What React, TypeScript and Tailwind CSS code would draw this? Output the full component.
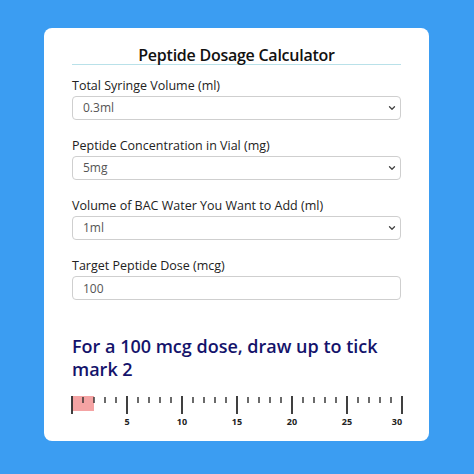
import React from "react";

const fields = [
  { label: "Total Syringe Volume (ml)", value: "0.3ml", options: ["0.3ml", "0.5ml", "1ml"] },
  { label: "Peptide Concentration in Vial (mg)", value: "5mg", options: ["5mg", "10mg", "15mg"] },
  { label: "Volume of BAC Water You Want to Add (ml)", value: "1ml", options: ["1ml", "2ml", "3ml"] },
];

function Chevron() {
  return (
    <svg
      className="pointer-events-none absolute right-[5px] top-1/2 -translate-y-1/2"
      width="8"
      height="5"
      viewBox="0 0 8 5"
      fill="none"
    >
      <path d="M1.5 1.2 L4 3.7 L6.5 1.2" stroke="#444" strokeWidth="1.3" strokeLinecap="round" strokeLinejoin="round" />
    </svg>
  );
}

function Ruler({ units, filled }: { units: number; filled: number }) {
  const step = 11;
  const ticks = Array.from({ length: units + 1 }, (_, i) => i);
  return (
    <svg width="336" height="34" className="-ml-[1px] block overflow-visible">
      <rect x="1" y="0" width={filled * step} height="15" fill="#f4a3a3" />
      {ticks.map((i) => {
        const x = 1 + i * step;
        const major = i % 5 === 0;
        return (
          <line
            key={i}
            x1={x}
            x2={x}
            y1={major ? 0 : 1}
            y2={major ? 18 : 7}
            stroke="#2b2b2b"
            strokeWidth={major ? 1.8 : 1.4}
          />
        );
      })}
      {ticks
        .filter((i) => i > 0 && i % 5 === 0)
        .map((i) => (
          <text
            key={i}
            x={i === units ? 1 + i * step - 5 : 1 + i * step}
            y="29"
            textAnchor="middle"
            fontSize="9"
            fontWeight="700"
            fill="#222"
            fontFamily="'Open Sans', sans-serif"
          >
            {i}
          </text>
        ))}
    </svg>
  );
}

export default function App() {
  return (
    <div className="flex h-[474px] w-[474px] bg-[#3b9df2] pb-[33px] pl-[44px] pr-[45px] pt-[28px] font-['Open_Sans',sans-serif]">
      <div className="flex w-full flex-col rounded-[8px] bg-white px-[28px] pt-[18px]">
        <h1 className="border-b border-[#b9e1e9] text-center text-[16px] font-semibold leading-[18px] tracking-[-0.25px] text-[#111]">
          Peptide Dosage Calculator
        </h1>

        <div className="mt-[13px] flex flex-col gap-[18px]">
          {fields.map((f) => (
            <div key={f.label} className="flex flex-col gap-[2px]">
              <label className="text-[12.5px] leading-[16px] text-[#222]">{f.label}</label>
              <div className="relative">
                <select
                  defaultValue={f.value}
                  className="block h-[24px] w-full appearance-none rounded-[4px] border border-[#cfcfcf] bg-white pl-[10px] text-[12px] text-[#555] outline-none"
                >
                  {f.options.map((o) => (
                    <option key={o}>{o}</option>
                  ))}
                </select>
                <Chevron />
              </div>
            </div>
          ))}
          <div className="flex flex-col gap-[2px]">
            <label className="text-[12.5px] leading-[16px] text-[#222]">Target Peptide Dose (mcg)</label>
            <input
              defaultValue="100"
              className="block h-[24px] w-full rounded-[4px] border border-[#cfcfcf] bg-white pl-[10px] text-[12px] text-[#555] outline-none"
            />
          </div>
        </div>

        <h2 className="mt-[35px] text-[18px] font-semibold leading-[23px] text-[#14136b]">
          For a 100 mcg dose, draw up to tick mark 2
        </h2>

        <div className="mt-[15px]">
          <Ruler units={30} filled={2} />
        </div>
      </div>
    </div>
  );
}
